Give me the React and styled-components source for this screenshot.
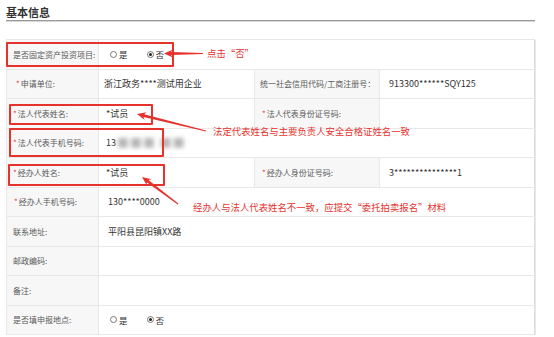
import React from 'react';
import styled, { createGlobalStyle } from 'styled-components';

const GlobalStyle = createGlobalStyle`
  body {
    margin: 0;
    background: #fff;
    font-family: "Noto Sans CJK SC", "Noto Sans", sans-serif;
  }
`;

const Page = styled.div`
  position: relative;
  width: 554px;
  height: 337px;
  box-sizing: border-box;
  padding: 6px 19px 0 6px;
  overflow: hidden;
`;

const Title = styled.h2`
  margin: 0 0 18px;
  height: 14px;
  font-size: 11px;
  line-height: 13px;
  font-weight: 700;
  color: #333;
  border-bottom: 1px solid #9a9a9a;
  box-shadow: 0 1px 0 #d6d6d6;
`;

const Table = styled.div`
  display: grid;
  grid-template-columns: 92px 156px 125px 156px;
  grid-auto-rows: 29.5px;
  border-top: 1px solid #e8e8e8;
  border-left: 1px solid #e8e8e8;
  border-right: 1px solid #dcdcdc;
`;

const Cell = styled.div`
  box-sizing: border-box;
  display: flex;
  align-items: center;
  border-right: 1px solid #e8e8e8;
  border-bottom: 1px solid #e8e8e8;
  grid-column: span ${p => p.$span || 1};
  white-space: nowrap;
  overflow: hidden;
`;

const Label = styled(Cell)`
  background: #f7f7f7;
  color: #5a5a5a;
  font-size: 8px;
  padding-left: ${p => p.$pad || 6}px;
`;

const Value = styled(Cell)`
  color: #333;
  font-size: 9px;
  padding-left: ${p => p.$pad || 5}px;
`;

const Star = styled.span`
  color: #e4393c;
  margin-right: 1px;
`;

const RadioGroup = styled.div`
  display: flex;
  align-items: center;
  gap: 19px;
  font-size: 8.5px;
  color: #333;
`;

const RadioItem = styled.label`
  display: flex;
  align-items: center;
  gap: 2px;
`;

const Dot = styled.span`
  box-sizing: border-box;
  width: 7px;
  height: 7px;
  border-radius: 50%;
  border: 1px solid #777;
  background: #fff;
  display: flex;
  align-items: center;
  justify-content: center;

  &::after {
    content: '';
    width: 3px;
    height: 3px;
    border-radius: 50%;
    background: ${p => (p.$on ? '#222' : 'transparent')};
  }
`;

const Blur = styled.span`
  color: #b5b5b5;
  font-size: 12px;
  font-weight: 700;
  filter: blur(2px);
  letter-spacing: 1px;
  margin-left: 1px;
`;

const Box = styled.div`
  position: absolute;
  box-sizing: border-box;
  left: ${p => p.$x}px;
  top: ${p => p.$y}px;
  width: ${p => p.$w}px;
  height: ${p => p.$h}px;
  border: 2px solid #e5322d;
  border-radius: 1px;
  pointer-events: none;
`;

const Note = styled.div`
  position: absolute;
  left: ${p => p.$x}px;
  top: ${p => p.$y}px;
  font-size: 9.4px;
  line-height: 12px;
  color: #e5322d;
  white-space: nowrap;
`;

const ArrowLayer = styled.svg`
  position: absolute;
  left: 0;
  top: 0;
  pointer-events: none;
`;

const Radio = ({ value }) => (
  <RadioGroup>
    <RadioItem><Dot $on={value === '是'} />是</RadioItem>
    <RadioItem><Dot $on={value === '否'} />否</RadioItem>
  </RadioGroup>
);

// tapered arrow polygon, tip -> tail
const arrow = (tx, ty, sx, sy) => {
  const len = Math.hypot(sx - tx, sy - ty);
  const ux = (sx - tx) / len, uy = (sy - ty) / len;
  const nx = -uy, ny = ux;
  const hl = 9, hw = 4, sw = 1.4, tw = 0.5;
  const p = (d, w) => `${tx + ux * d + nx * w},${ty + uy * d + ny * w}`;
  return [p(0, 0), p(hl, hw), p(hl - 2, sw), p(len, tw), p(len, -tw), p(hl - 2, -sw), p(hl, -hw)].join(' ');
};

const App = () => (
  <Page>
    <GlobalStyle />
    <Title>基本信息</Title>
    <Table>
      <Label>是否固定资产投资项目:</Label>
      <Value $span={3} $pad={11}><Radio value="否" /></Value>

      <Label $pad={9}><Star>*</Star>申请单位:</Label>
      <Value>浙江政务****测试用企业</Value>
      <Label $pad={5}>统一社会信用代码/工商注册号：</Label>
      <Value $pad={9}>913300******SQY125</Value>

      <Label><Star>*</Star>法人代表姓名:</Label>
      <Value $pad={7}>*试员</Value>
      <Label $pad={7}><Star>*</Star>法人代表身份证号码:</Label>
      <Value />

      <Label><Star>*</Star>法人代表手机号码:</Label>
      <Value $span={3} $pad={7}>13<Blur>■■■ ■■</Blur></Value>

      <Label><Star>*</Star>经办人姓名:</Label>
      <Value $pad={7}>*试员</Value>
      <Label $pad={7}><Star>*</Star>经办人身份证号码:</Label>
      <Value $pad={9}>3***************1</Value>

      <Label $pad={7}><Star>*</Star>经办人手机号码:</Label>
      <Value $span={3} $pad={9}>130****0000</Value>

      <Label>联系地址:</Label>
      <Value $span={3} $pad={9}>平阳县昆阳镇XX路</Value>

      <Label>邮政编码:</Label>
      <Value $span={3} />

      <Label>备注:</Label>
      <Value $span={3} />

      <Label>是否填申报地点:</Label>
      <Value $span={3} $pad={11}><Radio value="否" /></Value>
    </Table>

    <Box $x={6} $y={42} $w={168} $h={25} />
    <Box $x={9} $y={104} $w={144} $h={21} />
    <Box $x={9} $y={128} $w={155} $h={29} />
    <Box $x={8} $y={164} $w={157} $h={22} />

    <ArrowLayer width="554" height="337" viewBox="0 0 554 337">
      <polygon points={arrow(164, 53.5, 203, 53.5)} fill="#e5322d" />
      <polygon points={arrow(137, 114, 206, 131)} fill="#e5322d" />
      <polygon points={arrow(142, 177, 178, 204)} fill="#e5322d" />
    </ArrowLayer>

    <Note $x={207} $y={47}>点击“否”</Note>
    <Note $x={213} $y={125}>法定代表姓名与主要负责人安全合格证姓名一致</Note>
    <Note $x={193} $y={201}>经办人与法人代表姓名不一致，应提交“委托拍卖报名”材料</Note>
  </Page>
);

export default App;
